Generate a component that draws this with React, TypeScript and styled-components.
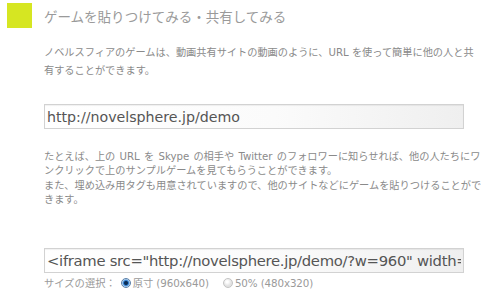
import * as React from "react";
import styled, { createGlobalStyle } from "styled-components";

const GlobalStyle = createGlobalStyle`
  html, body {
    margin: 0;
    padding: 0;
    background: #fff;
  }
  body {
    font-family: "DejaVu Sans", "Noto Sans CJK JP", sans-serif;
  }
`;

const embedTag =
  '<iframe src="http://novelsphere.jp/demo/?w=960" width="960" height="640" frameborder="0" scrolling="no"></iframe>';

type SizeOption = {
  label: string;
  checked: boolean;
};

const sizes: SizeOption[] = [
  { label: "原寸 (960x640)", checked: true },
  { label: "50% (480x320)", checked: false }
];

export default function App() {
  return (
    <Page>
      <GlobalStyle />
      <Header>
        <Marker />
        <Title>ゲームを貼りつけてみる・共有してみる</Title>
      </Header>
      <Body>
        <Lead>
          ノベルスフィアのゲームは、動画共有サイトの動画のように、URL を使って簡単に他の人と共有することができます。
        </Lead>
        <UrlField readOnly value="http://novelsphere.jp/demo" />
        <Note>
          たとえば、上の URL を Skype の相手や Twitter のフォロワーに知らせれば、他の人たちにワンクリックで上のサンプルゲームを見てもらうことができます。
          <br />
          また、埋め込み用タグも用意されていますので、他のサイトなどにゲームを貼りつけることができます。
        </Note>
        <UrlField readOnly value={embedTag} big />
        <SizeRow>
          <SizeLabel>サイズの選択：</SizeLabel>
          {sizes.map((s, i) => (
            <SizeChoice key={i}>
              <Radio checked={s.checked} />
              {s.label}
            </SizeChoice>
          ))}
        </SizeRow>
      </Body>
    </Page>
  );
}

const Page = styled.div`
  width: 490px;
  height: 297px;
  overflow: hidden;
`;

const Header = styled.div`
  display: flex;
  align-items: center;
  gap: 12px;
  padding: 3px 0 0 7px;
  height: 25px;
`;

const Marker = styled.div`
  width: 25px;
  height: 25px;
  background: #d6e622;
  flex-shrink: 0;
`;

const Title = styled.h1`
  margin: 0;
  font-size: 13.5px;
  font-weight: normal;
  color: #9a9a9a;
  font-family: "Noto Sans CJK JP", sans-serif;
  line-height: 24px;
`;

const Body = styled.div`
  padding: 16px 0 0 44px;
  width: 437px;
`;

const Lead = styled.p`
  margin: 0;
  font-size: 10.2px;
  line-height: 18px;
  color: #8a8a8a;
`;

const Note = styled.p`
  margin: 0;
  width: 441px;
  padding-top: 21px;
  font-size: 10.2px;
  line-height: 14.4px;
  word-spacing: 1px;
  color: #8a8a8a;
`;

const UrlField = styled.input<{ big?: boolean }>`
  display: block;
  box-sizing: border-box;
  width: 420px;
  height: 25px;
  margin: ${(p) => (p.big ? "40px 0 0" : "24px 0 0")};
  padding: 0 2px;
  border: 1px solid #d2d2d2;
  outline: none;
  background: linear-gradient(to right, #ffffff 0%, #fbfbfb 55%, #efefef 100%);
  box-shadow: inset 0 1px 1px rgba(0, 0, 0, 0.06);
  font-family: "DejaVu Sans", "Noto Sans CJK JP", sans-serif;
  font-size: ${(p) => (p.big ? "14.8px" : "14.2px")};
  color: #555;
  letter-spacing: ${(p) => (p.big ? "-0.3px" : "0")};
`;

const SizeRow = styled.div`
  display: flex;
  align-items: center;
  height: 16px;
  margin-top: 2px;
  font-size: 10.3px;
  color: #9a9a9a;
`;

const SizeLabel = styled.span`
  margin-right: 5px;
`;

const SizeChoice = styled.label`
  display: inline-flex;
  align-items: center;
  gap: 1px;
  margin-right: 14px;
  letter-spacing: -0.1px;
`;

const Radio = styled.span<{ checked?: boolean }>`
  display: inline-block;
  box-sizing: border-box;
  width: 10px;
  height: 10px;
  border-radius: 50%;
  border: 1px solid ${(p) => (p.checked ? "#5a7fa8" : "#c4c4c4")};
  background: ${(p) =>
    p.checked
      ? "radial-gradient(circle at 50% 50%, #0b2d55 0 1.5px, #2f7fd1 2.5px, #cfe4f7 4px)"
      : "radial-gradient(circle at 40% 35%, #ffffff 0 1px, #e2e2e2 4px)"};
  margin-right: 1px;
`;
